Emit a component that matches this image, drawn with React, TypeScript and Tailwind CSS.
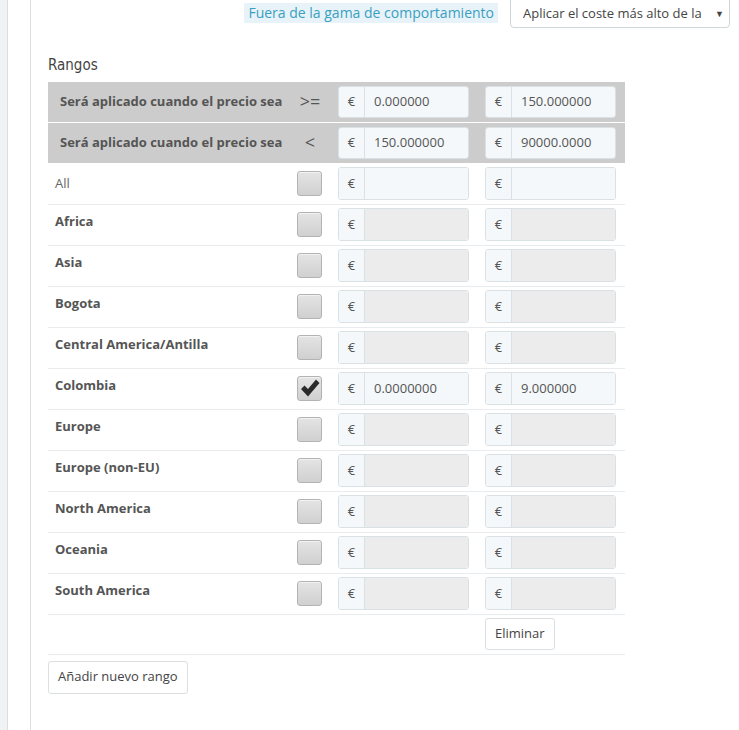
const zones = [
  { name: 'Africa', checked: false },
  { name: 'Asia', checked: false },
  { name: 'Bogota', checked: false },
  { name: 'Central America/Antilla', checked: false },
  { name: 'Colombia', checked: true, from: '0.0000000', to: '9.000000' },
  { name: 'Europe', checked: false },
  { name: 'Europe (non-EU)', checked: false },
  { name: 'North America', checked: false },
  { name: 'Oceania', checked: false },
  { name: 'South America', checked: false },
]

function PriceInput({ value, disabled, h = 'h-[33px]' }: { value?: string; disabled?: boolean; h?: string }) {
  return (
    <div className={`flex w-[131px] ${h} rounded-[3px] border border-[#d9e1e4] overflow-hidden`}>
      <span className="w-[26px] flex items-center justify-center bg-[#f4f8fa] border-r border-[#d9e1e4] text-[13px] text-[#555]">€</span>
      <span
        className={`flex-1 flex items-center pl-[9px] text-[13px] text-[#555] ${disabled ? 'bg-[#ececec]' : 'bg-[#f4f8fa]'}`}
      >
        {value}
      </span>
    </div>
  )
}

function Checkbox({ checked }: { checked?: boolean }) {
  return (
    <div className="w-[25px] h-[25px] rounded-[3px] border border-[#b3b3b3] bg-gradient-to-b from-[#e4e4e4] to-[#d0d0d0] shadow-[inset_0_1px_0_#f2f2f2] flex items-center justify-center">
      {checked && (
        <svg width="20" height="19" viewBox="0 0 20 19">
          <path d="M1 10 L4.5 6.5 L8 10 L16 0.5 L19.5 4 L8 17.5 Z" fill="#2a2a2a" />
        </svg>
      )}
    </div>
  )
}

export default function App() {
  return (
    <div className="flex min-h-[730px] bg-white" style={{ fontFamily: '"Open Sans", sans-serif' }}>
      <div className="w-[8px] bg-[#f0f2f3] border-r border-[#dcdfe1]" />
      <div className="w-[23px] border-r border-[#dcdfe1]" />
      <div className="flex-1 pl-[17px]">
        <div className="flex justify-end items-start gap-[12px] pr-[9px]">
          <span className="mt-[3px] px-[4px] h-[20px] leading-[20px] bg-[#e7f3f8] text-[#3a9fc2] text-[14px]">
            Fuera de la gama de comportamiento
          </span>
          <div className="w-[220px] h-[29px] -mt-[1px] border border-[#cfd6d9] rounded-b-[4px] flex items-center justify-between pl-[12px] pr-[5px] text-[13px] text-[#444]">
            <span>Aplicar el coste más alto de la</span>
            <span className="text-[9px]">▼</span>
          </div>
        </div>

        <div className="mt-[26px] mb-[5px] text-[15px] text-[#444]" style={{ fontFamily: '"DejaVu Sans Condensed", "DejaVu Sans", sans-serif', fontStretch: 'condensed' }}>
          Rangos
        </div>

        <div className="w-[577px]">
          {[
            { op: '>=', from: '0.000000', to: '150.000000' },
            { op: '<', from: '150.000000', to: '90000.0000' },
          ].map((r, i) => (
            <div key={i} className="grid grid-cols-[242px_40px_147px_148px] h-[41px] bg-[#cccccc] border-b border-white items-center">
              <span className="pl-[12px] text-[13px] font-bold text-[#555]">Será aplicado cuando el precio sea</span>
              <span className="text-center text-[18px] text-[#555]">{r.op}</span>
              <div className="pl-[8px]"><PriceInput value={r.from} h="h-[32px]" /></div>
              <div className="pl-[8px]"><PriceInput value={r.to} h="h-[32px]" /></div>
            </div>
          ))}

          <div className="grid grid-cols-[242px_40px_147px_148px] h-[41px] border-b border-[#e9ecee] items-center">
            <span className="pl-[7px] pt-[1px] text-[13px] text-[#666]">All</span>
            <div className="pl-[7px]"><Checkbox /></div>
            <div className="pl-[8px]"><PriceInput /></div>
            <div className="pl-[8px]"><PriceInput /></div>
          </div>

          {zones.map((z) => (
            <div key={z.name} className="grid grid-cols-[242px_40px_147px_148px] h-[41px] border-b border-[#e9ecee] items-center">
              <span className="pl-[7px] -mt-[6px] text-[13px] font-bold text-[#555]">{z.name}</span>
              <div className="pl-[7px]"><Checkbox checked={z.checked} /></div>
              <div className="pl-[8px]"><PriceInput value={z.from} disabled={!z.checked} /></div>
              <div className="pl-[8px]"><PriceInput value={z.to} disabled={!z.checked} /></div>
            </div>
          ))}

          <div className="grid grid-cols-[242px_40px_147px_148px] h-[40px] border-b border-[#e9ecee] items-center">
            <span />
            <span />
            <span />
            <div className="pl-[8px]">
              <button className="h-[32px] px-[9px] bg-white border border-[#dcdfe1] rounded-[3px] text-[13px] text-[#444]">
                Eliminar
              </button>
            </div>
          </div>
        </div>

        <button className="mt-[6px] h-[33px] px-[9px] bg-white border border-[#dcdfe1] rounded-[3px] text-[13px] text-[#444]">
          Añadir nuevo rango
        </button>
      </div>
    </div>
  )
}
